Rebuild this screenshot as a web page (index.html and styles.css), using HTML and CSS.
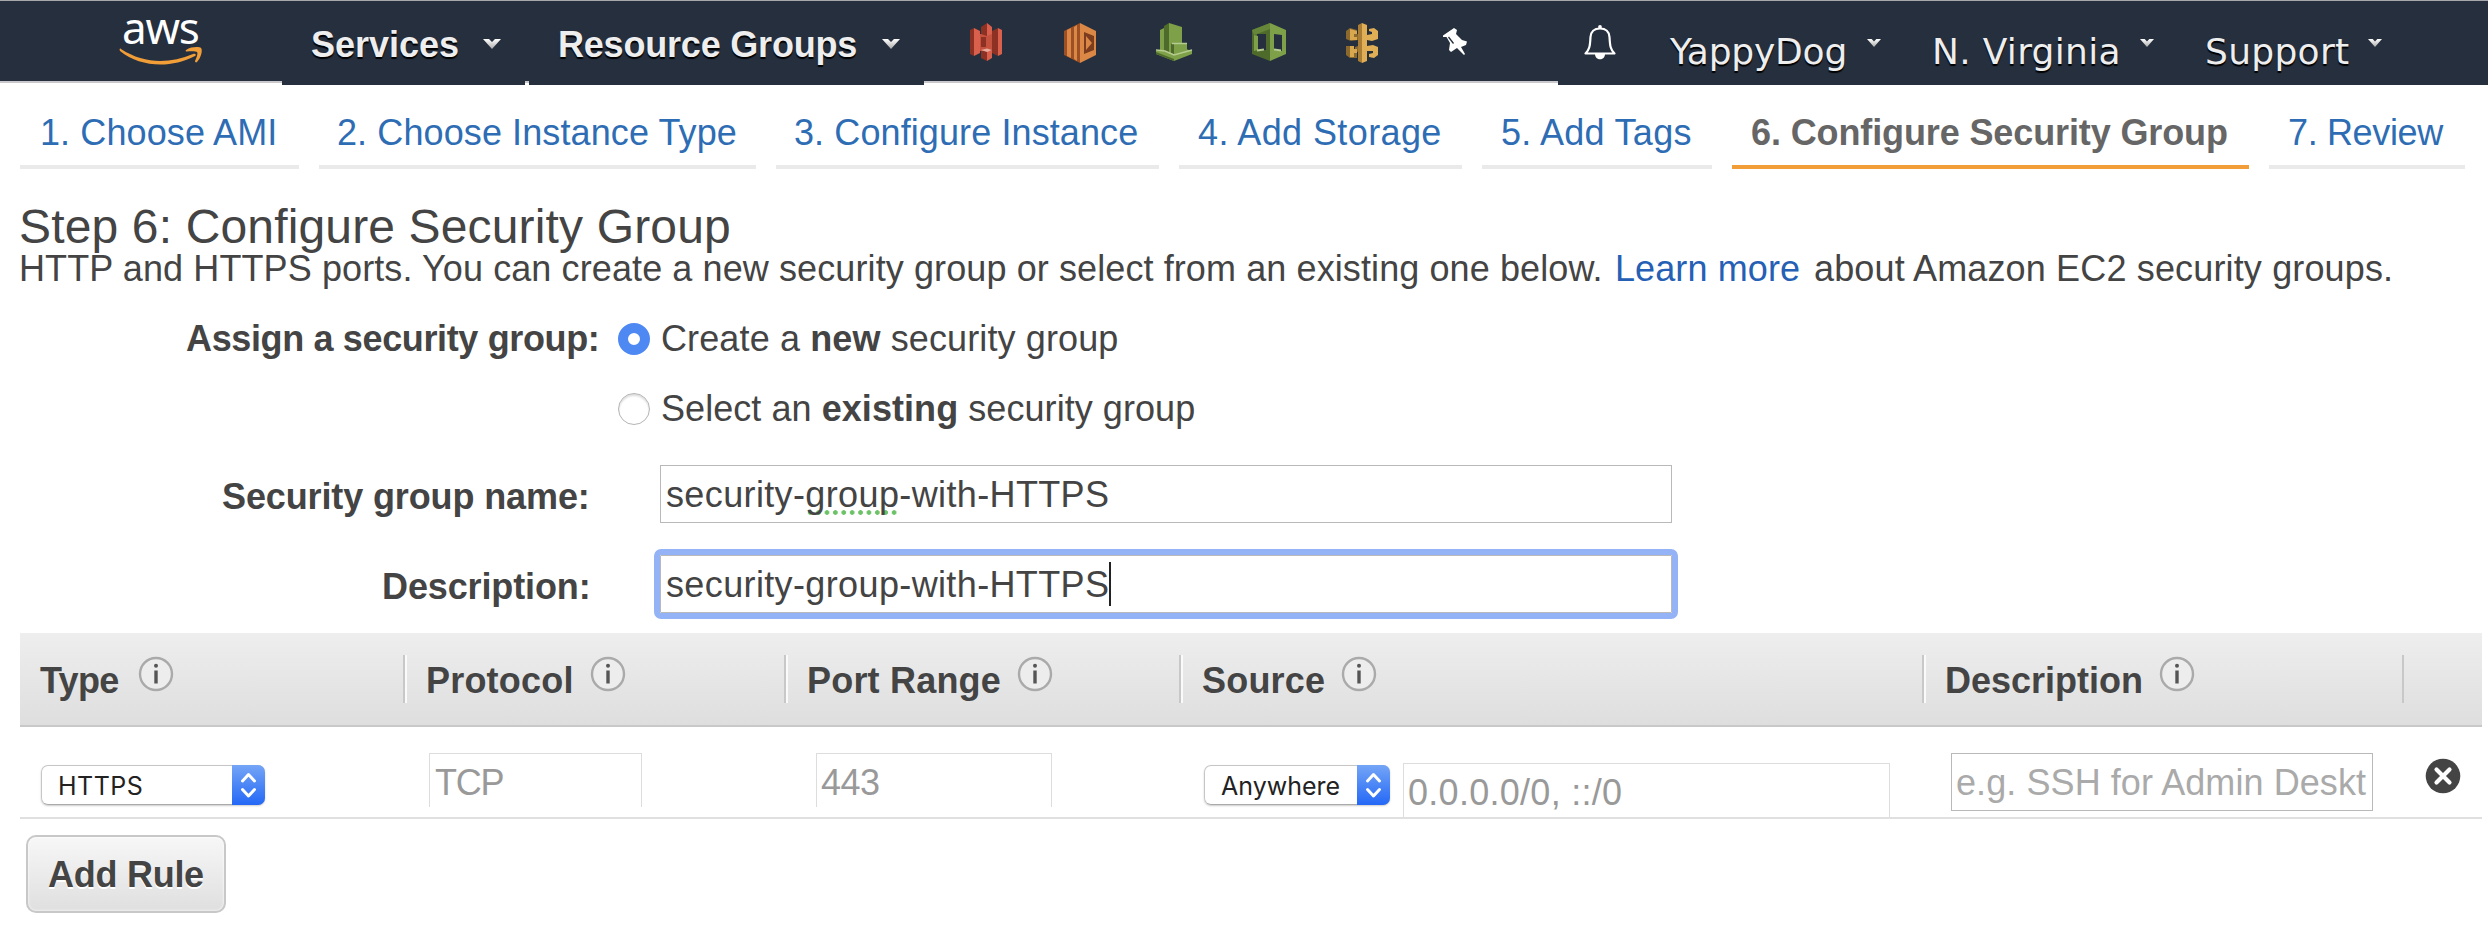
FILE: index.html
```
<!DOCTYPE html>
<html lang="en">
<head>
<meta charset="utf-8">
<title>Step 6: Configure Security Group</title>
<link rel="stylesheet" href="styles.css">
</head>
<body>
<svg class="defs" width="0" height="0" aria-hidden="true">
  <symbol id="info" viewBox="0 0 36 36"><circle cx="18" cy="18" r="16" fill="#ededed" stroke="#aaa" stroke-width="2.4"/><circle cx="18" cy="9.8" r="2" fill="#555"/><path d="M18 14.5v13" stroke="#555" stroke-width="3.4"/></symbol>
  <linearGradient id="fade" x1="0" y1="0" x2="0" y2="1"><stop offset="0" stop-color="#fff"/><stop offset="1" stop-color="#aaa"/></linearGradient>
  <symbol id="caret" viewBox="0 0 18 10" preserveAspectRatio="none"><path d="M0 0H6L9 3L12 0H18L9 10Z" fill="url(#fade)"/></symbol>
  <symbol id="updown" viewBox="0 0 33 40"><path d="M10.500 16L16.500 9.500L22.500 16M10.500 24.500L16.500 31L22.500 24.500" fill="none" stroke="#fff" stroke-width="3" stroke-linecap="round" stroke-linejoin="round"/></symbol>
</svg>
<header class="nav">
  <div class="logo">
    <span class="logo-text">aws</span>
    <svg class="smile" viewBox="0 0 82 18"><path d="M1 2C24 17 49 17 73 7C75 6 77 8 75 9C50 22 20 20 0 4C-1 2 0 1 1 2Z" fill="#f19d38"/><path d="M66 3C72-1 80 0 81 1C83 3 81 11 77 15C76 16 75 15 75 14C77 10 78 6 77 5C76 4 71 4 67 4.500C66 4.500 65 4 66 3Z" fill="#f19d38"/></svg>
  </div>
  <div class="menu services"><span class="t">Services</span><svg class="caret"><use href="#caret"/></svg></div>
  <div class="menu groups"><span class="t">Resource Groups</span><svg class="caret"><use href="#caret"/></svg></div>
  <div class="shortcuts">
    <svg class="i1" viewBox="0 0 32 38"><path d="M0 7L4 5V33L0 31Z" fill="#8c3123"/><path d="M4 5L10 8V30L4 33Z" fill="#d9604d"/><path d="M32 7L28 5V33L32 31Z" fill="#d9604d"/><path d="M28 5L22 8V30L28 33Z" fill="#8c3123"/><path d="M10 11H22V28H10Z" fill="#c5513f"/><path d="M11 14H16V24H11Z" fill="#8c3123"/><path d="M11 4L17 0V13L11 11Z" fill="#8c3123"/><path d="M17 0L22 4V11L17 13Z" fill="#d9604d"/><path d="M11 28H17V38L11 35Z" fill="#8c3123"/><path d="M17 28H22V35L17 38Z" fill="#d9604d"/><path d="M11 27L17 25.500L22 27L17 29Z" fill="#e9a99d"/></svg>
    <svg class="i2" viewBox="0 0 32 40"><path d="M0 8L16 0V40L0 32Z" fill="#9d5025"/><path d="M3 7L7 5V35L3 33Z" fill="#db8745"/><path d="M10 4L13 2V38L10 36Z" fill="#db8745"/><path d="M16 0L32 8V32L16 40Z" fill="#db8745"/><path d="M20 9L30 13V27L20 31Z" fill="#7b3d1d"/><path d="M22 13L28 20L22 27Z" fill="#db8745"/></svg>
    <svg class="i3" viewBox="0 0 36 38"><path d="M0 28L18 22L36 28V31L18 38L0 31Z" fill="#7ea049"/><path d="M0 29L18 36V38L0 31Z" fill="#4f6b2b"/><path d="M4 7L8 5V28L4 27Z" fill="#7ea049"/><path d="M8 3L13 0V30L8 28Z" fill="#4f6b2b"/><path d="M13 0L26 4V22L13 29Z" fill="#7ea049"/><path d="M15 21L19 20V32L15 30Z" fill="#4f6b2b"/><path d="M18 20H31V30L18 33Z" fill="#7ea049"/><path d="M16 20.500H31M0 27L9 28L18 32L36 27" stroke="#b6cb90" stroke-width="1.500" fill="none"/></svg>
    <svg class="i4" viewBox="0 0 34 38"><path fill-rule="evenodd" d="M0 7L18 0V38L0 31ZM5 11V28L14 27V11Z" fill="#4f6b2b"/><path fill-rule="evenodd" d="M18 0L34 7V31L18 38ZM22 11V27L30 28V12Z" fill="#7ea049"/><path d="M2 12L6 13V27L2 28Z" fill="#7ea049"/><path d="M0 7L18 0V6L5 11L2 12Z" fill="#66863a"/><path d="M5 27.500L12 26.500M22 26.500L29 27.500" stroke="#b6cb90" stroke-width="2"/></svg>
    <svg class="i5" viewBox="0 0 32 40"><path d="M0 8L4 5L11 7V11L13 12V28L11 29V35L4 35L0 32V23H5V28H9V24L12 23V17L5 18L0 16Z" fill="#8c6a2d"/><path d="M4 6L11 8V11H8V14H11V17H4Z M4 23H8V26H11V30H8V34H4Z" fill="#d9a74d"/><path d="M12 2L16 0V40L12 38Z" fill="#a97d35"/><path d="M16 0L21 2V12L26 11V9L23 8V6L28 5L32 8V16L26 18L21 17V23L27 22L32 24V32L28 35L23 34V31L27 30V28L21 28V38L16 40Z" fill="#e0ae54"/></svg>
    <svg class="pin" viewBox="0 0 24 27"><path d="M0 7.500L11 0L14 2L13 6L19 12L24 13.500L23 17L18 19L22 26L21 27L14 20L8 24L6 22L7 15L3.500 9L0 9Z" fill="#fff"/><path d="M5.500 9L10.500 15.500" stroke="#252f3e" stroke-width="1.300"/></svg>
  </div>
  <div class="account">
    <svg class="bell" viewBox="0 0 32 34"><path d="M1.500 28.500C6 24 6 20 6.500 12C7 6 11 3.500 16 3.500S25 6 25.500 12C26 20 26 24 30.500 28.500Z" fill="none" stroke="#fff" stroke-width="2.200" stroke-linejoin="round"/><circle cx="16" cy="2" r="1.900" fill="#fff"/><path d="M11 29H21C21 36 11 36 11 29Z" fill="#fff"/></svg>
    <span class="t acct a1">YappyDog</span><svg class="caret small"><use href="#caret"/></svg>
    <span class="t acct a2">N. Virginia</span><svg class="caret small"><use href="#caret"/></svg>
    <span class="t acct a3">Support</span><svg class="caret small"><use href="#caret"/></svg>
  </div>
</header>
<nav class="steps">
  <a class="step s1"><span class="t">1. Choose AMI</span></a>
  <a class="step s2"><span class="t">2. Choose Instance Type</span></a>
  <a class="step s3"><span class="t">3. Configure Instance</span></a>
  <a class="step s4"><span class="t">4. Add Storage</span></a>
  <a class="step s5"><span class="t">5. Add Tags</span></a>
  <a class="step s6 current"><span class="t">6. Configure Security Group</span></a>
  <a class="step s7"><span class="t">7. Review</span></a>
</nav>
<main>
  <h1><span class="t">Step 6: Configure Security Group</span></h1>
  <p class="intro"><span class="t in1">HTTP and HTTPS ports. You can create a new security group or select from an existing one below.</span><a class="t in2">Learn more</a><span class="t in3">about Amazon EC2 security groups.</span></p>
  <div class="choice"><b class="t assign">Assign a security group:</b><i class="radio on"></i><span class="opt">Create a <b>new</b> security group</span></div>
  <div class="choice second"><i class="radio"></i><span class="opt">Select an <b>existing</b> security group</span></div>
  <div class="field"><label class="t l1">Security group name:</label><div class="input"><span class="val">security-<span class="spell">group</span>-with-HTTPS</span></div></div>
  <div class="field desc"><label class="t l2">Description:</label><div class="input focus"><span class="val">security-group-with-HTTPS</span><i class="cursor"></i></div></div>
  <section class="rules">
    <div class="head">
      <div class="th"><span class="t type-label">Type</span><svg class="info"><use href="#info"/></svg></div>
      <div class="th"><span class="t">Protocol</span><svg class="info"><use href="#info"/></svg></div>
      <div class="th"><span class="t">Port Range</span><svg class="info"><use href="#info"/></svg></div>
      <div class="th"><span class="t">Source</span><svg class="info"><use href="#info"/></svg></div>
      <div class="th"><span class="t desc-label">Description</span><svg class="info"><use href="#info"/></svg></div>
      <div class="th last"></div>
    </div>
    <div class="row">
      <div class="td type"><div class="select wide"><span class="t">HTTPS</span><svg class="arrows"><use href="#updown"/></svg></div></div>
      <div class="td proto"><div class="box"><span class="t">TCP</span></div></div>
      <div class="td port"><div class="box"><span class="t">443</span></div></div>
      <div class="td source"><div class="select"><span class="t">Anywhere</span><svg class="arrows"><use href="#updown"/></svg></div><div class="box ip"><span class="t">0.0.0.0/0, ::/0</span></div></div>
      <div class="td note"><div class="box full"><span class="t">e.g. SSH for Admin Deskt</span></div></div>
      <div class="td del"><svg class="x" viewBox="0 0 36 36"><circle cx="18" cy="18" r="17.300" fill="#444"/><path d="M11.500 11.500L24.500 24.500M24.500 11.500L11.500 24.500" stroke="#fff" stroke-width="4.200" stroke-linecap="round"/></svg></div>
    </div>
  </section>
  <button class="add"><span class="t">Add Rule</span></button>
</main>
</body>
</html>
```
FILE: styles.css
```
* { box-sizing: border-box; }
body { margin: 0; width: 2488px; height: 930px; overflow: hidden; background: #fff; color: #444; font: 36px/40px "Liberation Sans", Arial, sans-serif; }
.defs { position: absolute; }
svg { display: block; flex: none; overflow: visible; }
i { flex: none; }
.t, .opt, .val { white-space: pre; flex: none; }

.nav { display: flex; height: 85px; border-top: 1px solid #a6a8ab; background: linear-gradient(#252f3e 80px, #c9c9cd 80px, #c9c9cd 82px, #fff 82px); }
.logo { width: 282px; padding: 3px 0 0 120px; }
.logo-text { display: block; height: 43px; padding-left: 2px; color: #fff; font: 44px/46px "Noto Sans", sans-serif; letter-spacing: -1.200px; }
.smile { width: 82px; height: 18px; }
.menu { display: flex; background: #252f3e; color: #eee; font-weight: bold; text-shadow: 0 2px 1px #000; padding-top: 24px; }
.services { width: 243px; padding-left: 29px; margin-right: 4px; }
.groups { width: 395px; padding-left: 29px; letter-spacing: -0.200px; }
.menu .t { width: 172px; }
.menu.groups .t { width: 324px; }
.caret { width: 18px; height: 10px; margin-top: 14px; }
.shortcuts { display: flex; width: 634px; padding: 22px 0 0 46px; }
.i1, .i2, .i5 { width: 32px; height: 38px; }
.i2, .i5 { height: 40px; }
.i2 { margin-left: 62px; }
.i3 { width: 36px; height: 38px; margin-left: 60px; }
.i4 { width: 34px; height: 38px; margin-left: 60px; }
.i5 { margin-left: 60px; }
.pin { width: 24px; height: 27px; margin: 5px 0 0 65px; }
.account { display: flex; flex: 1; background: #252f3e; color: #eee; padding: 24px 0 0 26px; font-family: "DejaVu Sans", sans-serif; font-size: 36px; text-shadow: 0 2px 1px #000; }
.bell { width: 32px; height: 34px; margin-right: 54px; }
.acct { margin-top: 7px; }
.a1 { width: 197px; letter-spacing: -0.200px; }
.a2 { width: 208px; margin-left: 51px; letter-spacing: 0.300px; }
.a3 { width: 163px; margin-left: 51px; letter-spacing: 0.300px; }
.caret.small { width: 14px; height: 8px; margin-top: 14px; }

.steps { display: flex; gap: 20px; padding-left: 20px; height: 84px; color: #2e6db4; }
.step { border-bottom: 4px solid #eaeaea; padding: 28px 0 0 19px; height: 84px; letter-spacing: 0.100px; }
.s1 { width: 279px; padding-left: 20px; }
.s2 { width: 437px; padding-left: 18px; }
.s3 { width: 383px; padding-left: 18px; }
.s4 { width: 283px; letter-spacing: 0.400px; }
.s5 { width: 230px; letter-spacing: 0.300px; }
.s6 { width: 517px; }
.s7 { width: 196px; letter-spacing: -0.350px; }
.current { color: #666; font-weight: bold; border-color: #f19d38; letter-spacing: -0.120px; }

h1 { margin: 0; padding: 32px 0 0 19px; height: 80px; font-size: 48px; line-height: 52px; font-weight: normal; letter-spacing: 0.150px; }
.intro { display: flex; margin: 0; height: 70px; padding: 0 0 0 19px; letter-spacing: 0.100px; }
.in1 { width: 1596px; }
.in2 { width: 199px; color: #2560b5; }
.in3 { letter-spacing: 0.150px; }
.choice { display: flex; height: 70px; padding-left: 186px; letter-spacing: 0.120px; }
.choice.second { padding-left: 618px; letter-spacing: 0.060px; }
.assign { width: 432px; letter-spacing: -0.360px; }
.radio { width: 32px; height: 32px; margin: 4px 11px 0 0; border-radius: 50%; border: 1px solid #b5b5b5; box-shadow: inset 0 2px 2px #ddd; }
.radio.on { border: 10px solid #4d88f3; box-shadow: none; }
.field { display: flex; align-items: flex-start; margin-top: 6px; height: 90px; }
.field label { width: 438px; margin-left: 222px; padding-top: 12px; font-weight: bold; letter-spacing: -0.120px; }
.field .l2 { width: 278px; margin-left: 382px; }
.field.desc { margin: 0; height: 78px; }
.input { display: flex; width: 1012px; height: 58px; border: 1px solid #b9b9b9; padding: 9px 0 0 5px; letter-spacing: 0.370px; }
.focus { outline: 6px solid #94b3f7; border-radius: 1px; }
.cursor { width: 2px; height: 44px; margin-top: -3px; background: #222; }
.spell { background: radial-gradient(circle, #6bc267 2px, transparent 2.600px) 1px 100% / 8.400px 5px repeat-x; }

.rules { width: 2462px; margin-left: 20px; }
.head, .row { display: grid; grid-template-columns: 383px 381px 395px 743px 480px 80px; }
.head { height: 94px; background: linear-gradient(#eee, #dedede); border-bottom: 2px solid #c8c8c8; font-weight: bold; letter-spacing: 0.200px; }
.th { display: flex; align-items: flex-start; height: 48px; margin-top: 22px; border-left: 2px solid #c8c8c8; box-shadow: inset 2px 0 #fafafa; padding: 6px 0 0 21px; }
.th:first-child { border: 0; box-shadow: none; padding-left: 20px; }
.th.last { box-shadow: none; }
.type-label { width: 82px; letter-spacing: -0.700px; }
.desc-label { letter-spacing: 0; }
.th .info { width: 36px; height: 36px; margin: -5px 0 0 16px; }
.row { height: 92px; border-bottom: 2px solid #e0e0e0; }
.td { display: flex; align-items: flex-start; }
.select { display: flex; justify-content: space-between; width: 186px; height: 40px; margin-top: 38px; border-radius: 7px; border: 1px solid #c6c6c6; border-bottom-color: #aaa; box-shadow: 0 1px 2px #ccc; padding-left: 16px; color: #222; font: 25px/40px Inter, sans-serif; }
.select.wide { width: 224px; margin-left: 21px; letter-spacing: 0.500px; }
.arrows { width: 33px; height: 40px; margin: -1px; border-radius: 0 7px 7px 0; background: linear-gradient(#74a5f6, #2468f6); }
.box { width: 213px; height: 54px; margin: 26px 0 0 26px; border: 1px solid #ddd; border-bottom: 0; padding: 9px 0 0 5px; color: #999; }
.proto .box { letter-spacing: -1.200px; }
.port .box { width: 236px; margin-left: 32px; padding-left: 4px; letter-spacing: -0.500px; }
.source { padding-left: 25px; }
.box.ip { width: 487px; height: 54px; margin: 36px 0 0 13px; padding-left: 4px; letter-spacing: 0.280px; }
.box.full { width: 422px; height: 58px; margin-left: 29px; padding-left: 4px; border: 1px solid #b9b9b9; color: #aaa; letter-spacing: 0.080px; }
.x { width: 36px; height: 36px; margin: 31px 0 0 23px; }
.add { display: block; width: 200px; height: 78px; margin: 16px 0 0 26px; padding: 2px 0 0; border: 2px solid #c8c8c8; border-radius: 10px; background: linear-gradient(#f7f7f7, #dfdfdf); box-shadow: inset 0 0 3px #fff; color: #444; font: bold 36px/40px "Liberation Sans", Arial, sans-serif; letter-spacing: -0.280px; text-shadow: 0 2px #fff; }
```
